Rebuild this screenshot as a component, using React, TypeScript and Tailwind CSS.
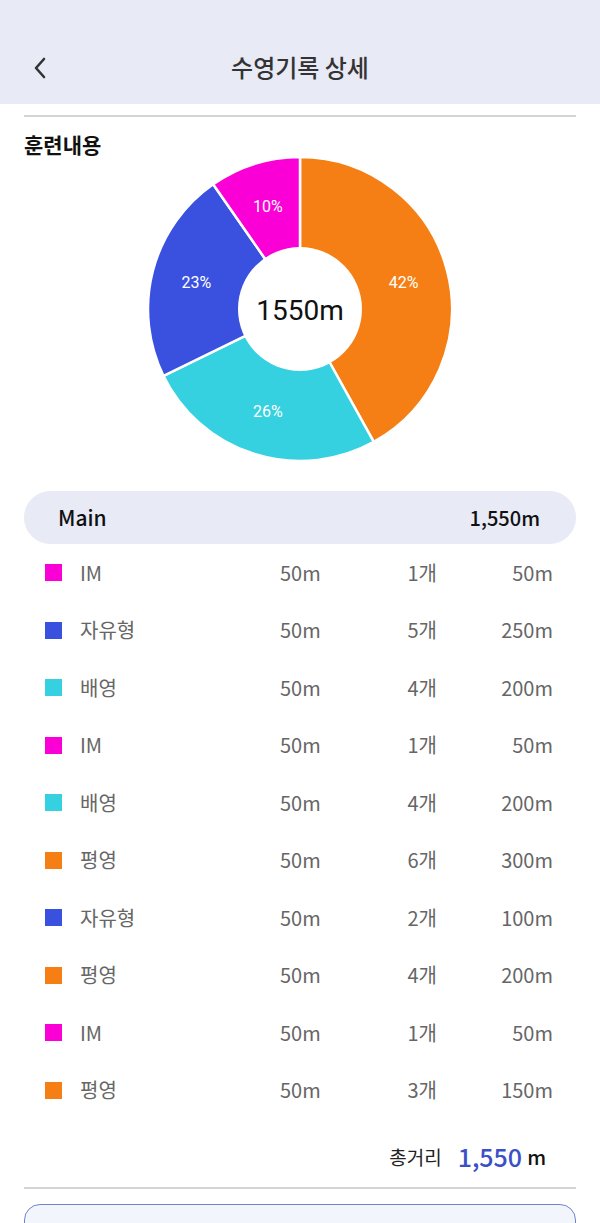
import React from "react";

const COLORS: Record<string, string> = {
  IM: "#fb00d6",
  자유형: "#3a51df",
  배영: "#36d1e0",
  평영: "#f57f14",
};

const rows = [
  ["IM", "50m", "1개", "50m"],
  ["자유형", "50m", "5개", "250m"],
  ["배영", "50m", "4개", "200m"],
  ["IM", "50m", "1개", "50m"],
  ["배영", "50m", "4개", "200m"],
  ["평영", "50m", "6개", "300m"],
  ["자유형", "50m", "2개", "100m"],
  ["평영", "50m", "4개", "200m"],
  ["IM", "50m", "1개", "50m"],
  ["평영", "50m", "3개", "150m"],
];

const segments = [
  { name: "평영", value: 650, label: "42%" },
  { name: "배영", value: 400, label: "26%" },
  { name: "자유형", value: 350, label: "23%" },
  { name: "IM", value: 150, label: "10%" },
];

function Donut() {
  const cx = 153;
  const cy = 153;
  const R = 152;
  const total = segments.reduce((s, x) => s + x.value, 0);
  let acc = 0;
  const pt = (r: number, a: number) => [cx + r * Math.sin(a), cy - r * Math.cos(a)];
  return (
    <svg width="306" height="306" viewBox="0 0 306 306">
      {segments.map((s) => {
        const a0 = (acc / total) * Math.PI * 2;
        acc += s.value;
        const a1 = (acc / total) * Math.PI * 2;
        const large = a1 - a0 > Math.PI ? 1 : 0;
        const [x0, y0] = pt(R, a0);
        const [x1, y1] = pt(R, a1);
        const d = `M ${cx} ${cy} L ${x0} ${y0} A ${R} ${R} 0 ${large} 1 ${x1} ${y1} Z`;
        return <path key={s.name} d={d} fill={COLORS[s.name]} stroke="#ffffff" strokeWidth="2.5" strokeLinejoin="round" />;
      })}
      <circle cx={cx} cy={cy} r={62} fill="#ffffff" />
      {(() => {
        let a = 0;
        return segments.map((s) => {
          const a0 = (a / total) * Math.PI * 2;
          a += s.value;
          const a1 = (a / total) * Math.PI * 2;
          const [x, y] = pt(107, (a0 + a1) / 2);
          return (
            <text
              key={s.label}
              x={x}
              y={y}
              fill="#ffffff"
              fontSize="16"
              fontFamily="Roboto, sans-serif"
              textAnchor="middle"
              dominantBaseline="central"
            >
              {s.label}
            </text>
          );
        });
      })()}
      <text
        x={cx}
        y={cy + 1}
        fill="#111111"
        fontSize="28"
        fontFamily="Roboto, sans-serif"
        textAnchor="middle"
        dominantBaseline="central"
      >
        1550m
      </text>
    </svg>
  );
}

export default function App() {
  return (
    <div
      className="w-[600px] h-[1223px] overflow-hidden bg-white"
      style={{ fontFamily: '"Noto Sans CJK KR", "Noto Sans", sans-serif' }}
    >
      <header className="relative h-[104px] bg-[#e8eaf6] flex items-end">
        <div className="w-full h-[68px] flex items-center justify-center relative">
          <svg className="absolute left-[32px] top-[20px]" width="16" height="24" viewBox="0 0 16 24">
            <polyline points="12,3 4,12 12,21" fill="none" stroke="#333333" strokeWidth="2.6" strokeLinecap="round" strokeLinejoin="round" />
          </svg>
          <h1 className="text-[24px] text-[#333333] font-medium leading-none -mt-[7px]">수영기록 상세</h1>
        </div>
      </header>

      <div className="px-6">
        <div className="mt-[11px] h-[2px] bg-[#d4d4d4]" />
        <h2 className="mt-[13px] text-[21px] leading-[28px] font-bold text-[#111111]">훈련내용</h2>
        <div className="flex justify-center -mt-[2px]">
          <Donut />
        </div>

        <div className="mt-[29px] h-[53px] rounded-full bg-[#e8eaf6] flex items-center justify-between pl-[34px] pr-[36px] text-[20px] font-medium text-[#111111]">
          <span className="text-[21px]">Main</span>
          <span>1,550m</span>
        </div>

        <div>
          {rows.map((r, i) => (
            <div key={i} className="h-[57.5px] flex items-center text-[20px] text-[#666666]">
              <div className="ml-[21px] w-[17px] h-[17px]" style={{ backgroundColor: COLORS[r[0]] }} />
              <span className="ml-[18px] w-[200px]">{r[0]}</span>
              <span className="w-[100px]">{r[1]}</span>
              <span className="w-[57px] text-right">{r[2]}</span>
              <span className="w-[116px] text-right">{r[3]}</span>
            </div>
          ))}
        </div>

        <div className="mt-[8px] h-[60px] flex items-center justify-end pr-[30px]">
          <span className="text-[19px] text-[#222222]">총거리</span>
          <span className="ml-[16px] text-[25px] text-[#3b50c8] font-medium">1,550</span>
          <span className="ml-[5px] text-[20px] text-[#111111] font-medium">m</span>
        </div>
        <div className="h-[2px] bg-[#d4d4d4]" />
        <div className="mt-[15px] h-[80px] rounded-[16px] border-[1.5px] border-[#7083cf] bg-[#f3f5fd]" />
      </div>
    </div>
  );
}
